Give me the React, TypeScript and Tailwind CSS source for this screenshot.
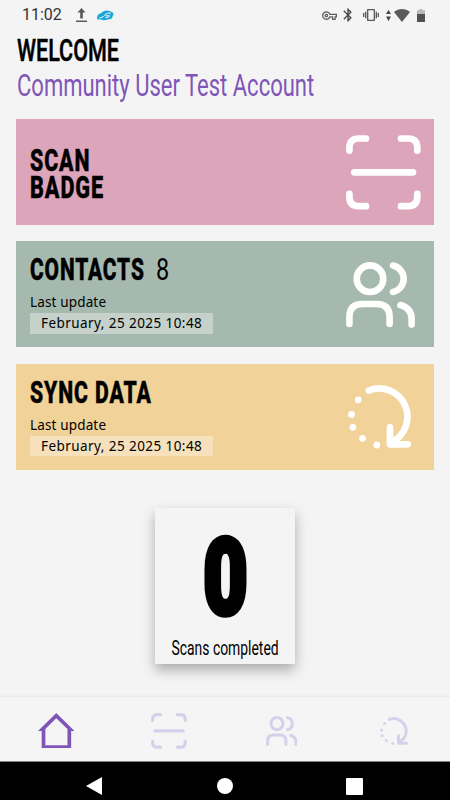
import type { ReactNode } from 'react';
import { MdBluetooth, MdOutlineVpnKey, MdVibration } from 'react-icons/md';

type IconProps = { className?: string };

function ScanIcon({ className }: IconProps) {
  return (
    <svg viewBox="26 24.7 75 75" className={className} fill="none" stroke="currentColor" strokeWidth="6.7" strokeLinecap="round" strokeLinejoin="round">
      <path d="M29.4 40.3V37.5Q29.4 28.2 38.7 28.2H46" />
      <path d="M81 28.2H88Q97.3 28.2 97.3 37.5V40.3" />
      <path d="M29.4 83.6V86.5Q29.4 95.9 38.7 95.9H46" />
      <path d="M81 95.9H88Q97.3 95.9 97.3 86.5V83.6" />
      <path d="M34.3 62H93" />
    </svg>
  );
}

function ContactsIcon({ className }: IconProps) {
  return (
    <svg viewBox="26 27 69 66" className={className} fill="none" stroke="currentColor" strokeWidth="6.6" strokeLinecap="round" strokeLinejoin="round">
      <circle cx="50" cy="43.7" r="13.3" />
      <path d="M73 30.6A13.5 13.5 0 0 1 73 57" />
      <path d="M29.4 89V82Q29.4 69 42.5 69H56.5Q69.6 69 69.6 82V89" />
      <path d="M80.4 70Q91.6 73 91.6 84V89.6" />
    </svg>
  );
}

function SyncIcon({ className }: IconProps) {
  return (
    <svg viewBox="27.5 30 63.5 63.5" className={className} fill="none" stroke="currentColor" strokeWidth="6.7" strokeLinecap="round" strokeLinejoin="round">
      <path d="M48.3 35.5A28.3 28.3 0 0 1 71 87.3" />
      <path d="M69.5 72.3V89.3H87.3" />
      <g fill="currentColor" stroke="none">
        <circle cx="37.7" cy="44.8" r="3.4" />
        <circle cx="31" cy="59.4" r="3.4" />
        <circle cx="32.3" cy="72.3" r="3.4" />
        <circle cx="42" cy="83.3" r="3.4" />
        <circle cx="56.3" cy="90" r="3.4" />
      </g>
    </svg>
  );
}

function HomeIcon({ className }: IconProps) {
  return (
    <svg viewBox="0 0 109 106" className={className} fill="currentColor" fillRule="evenodd">
      <path d="M54.5 0L109 54H99V106H11V54H0ZM54.5 16L22 48V96H88V48Z" />
    </svg>
  );
}

function StatusBar() {
  return (
    <div className="flex h-[30px] items-center pl-[22px] pr-[25px] text-[#5a5a5a]">
      <span className="w-[54px] font-['Roboto',sans-serif] text-[16px] leading-none text-[#333]">11:02</span>
      <svg viewBox="0 0 11 14" className="h-[14px] w-[11px]" fill="currentColor">
        <path d="M5.5 0L9.5 4.5H6.8V10.5H4.2V4.5H1.5ZM0 12.4H11V14H0Z" />
      </svg>
      <svg viewBox="0 0 17 11" className="ml-[10px] h-[11px] w-[17px]">
        <path d="M0 8C0 5 2 3.5 4.5 3C6 .5 10 -.3 13 1.3C16.5 2 17.5 4.5 15.5 6C16 8 14 9.8 11 9.3C9 10.5 5 10.5 4 9.2C2 10 0 9.5 0 8Z" fill="#18a9dc" />
        <path d="M2.5 8C6 7.3 7.5 6 8.5 4.2Q9.5 3 14 3M8.5 5.8H12.5Q12.5 7.5 8.5 7.6" fill="none" stroke="#f4f4f4" strokeWidth="1" />
      </svg>
      <div className="ml-auto flex items-center">
        <MdOutlineVpnKey className="size-[15px]" />
        <MdBluetooth className="ml-[3px] size-[16px] text-[#444]" />
        <MdVibration className="ml-[7px] size-[16px]" />
        <svg viewBox="0 0 5 11" className="ml-[7px] h-[11px] w-[5px]" fill="#444">
          <path d="M2.5 0L5 4H0ZM2.5 11L0 6.6H5Z" />
        </svg>
        <svg viewBox="0 0 16 13" className="ml-[3px] h-[13px] w-[16px]" fill="currentColor">
          <path d="M0 3C4.5 -1 11.5 -1 16 3L8 13Z" />
        </svg>
        <svg viewBox="0 0 8 13" className="ml-[7px] h-[13px] w-[8px]">
          <path d="M0 1.2H2.4V0H5.6V1.2H8V5H0Z" fill="#b9b9b9" />
          <path d="M0 5H8V13H0Z" fill="#505050" />
        </svg>
      </div>
    </div>
  );
}

function ActionCard({ color, icon, children }: { color: string; icon: ReactNode; children: ReactNode }) {
  return (
    <section className={`flex h-[106px] justify-between pl-[14px] text-white ${color}`}>
      <div className="text-black">{children}</div>
      {icon}
    </section>
  );
}

function LastUpdate() {
  return (
    <div className="font-['Noto_Sans',sans-serif] text-[13.5px] leading-[20px]">
      <p className="h-[21px] whitespace-nowrap tracking-[0.15px]">Last update</p>
      <p className="h-[20.5px] w-[183px] whitespace-nowrap bg-white/35 pl-[11px] tracking-[0.43px]">February, 25 2025 10:48</p>
    </div>
  );
}

export default function App() {
  return (
    <div className="flex h-[800px] w-[450px] flex-col overflow-hidden bg-[#f4f4f4] font-['Roboto',sans-serif]">
      <StatusBar />

      <header className="h-[89px] pl-[16.5px]">
        <h1 className="h-[38px] pt-[3px] text-[31px] font-medium leading-[36px]">
          <span className="inline-block origin-left scale-x-[0.695] whitespace-nowrap [-webkit-text-stroke:0.5px_black]">WELCOME</span>
        </h1>
        <p className="text-[31px] leading-[36px] text-[#8055b8]">
          <span className="inline-block origin-left scale-x-[0.71] whitespace-nowrap">Community User Test Account</span>
        </p>
      </header>

      <main className="flex flex-1 flex-col items-center">
        <div className="flex w-full flex-col gap-[16.4px] pl-[16px] pr-[16.5px]">
          <ActionCard color="bg-[#dca5b9]" icon={<ScanIcon className="mr-[12.5px] mt-[15.7px] size-[75px]" />}>
            <h2 className="w-[75px] pt-[27.5px] text-[30.5px] font-extrabold leading-[27px] tracking-[1.3px]">
              <span className="block origin-left scale-x-[0.7] whitespace-nowrap [-webkit-text-stroke:0.5px_black]">SCAN</span>
              <span className="block origin-left scale-x-[0.71] whitespace-nowrap [-webkit-text-stroke:0.5px_black]">BADGE</span>
            </h2>
          </ActionCard>

          <ActionCard color="bg-[#a6b9ae]" icon={<ContactsIcon className="mr-[18.5px] mt-[20.6px] h-[66px] w-[69px]" />}>
            <h2 className="flex h-[51px] pt-[11px] text-[30.5px] leading-[36px]">
              <span className="w-[126px] whitespace-nowrap font-extrabold tracking-[1.3px]"><span className="inline-block origin-left scale-x-[0.685] [-webkit-text-stroke:0.5px_black]">CONTACTS</span></span>
              <span className="inline-block origin-left scale-x-[0.77]">8</span>
            </h2>
            <LastUpdate />
          </ActionCard>

          <ActionCard color="bg-[#f1d298]" icon={<SyncIcon className="mr-[22.5px] mt-[21.3px] size-[63.5px]" />}>
            <h2 className="h-[51px] w-[130px] pt-[11px] text-[30.5px] font-extrabold leading-[36px] tracking-[1.3px]">
              <span className="inline-block origin-left scale-x-[0.695] whitespace-nowrap [-webkit-text-stroke:0.5px_black]">SYNC DATA</span>
            </h2>
            <LastUpdate />
          </ActionCard>
        </div>

        <section className="mt-[38.2px] flex h-[156px] w-[140px] flex-col items-center bg-[#f4f4f4] shadow-[0_6px_12px_rgba(0,0,0,0.3)]">
          <strong className="h-[127px] scale-x-[0.73] pt-[11px] text-[105px] font-black leading-[120px] [-webkit-text-stroke:5.5px_black]">0</strong>
          <span className="scale-x-[0.695] whitespace-nowrap text-[20px] leading-[26px]">Scans completed</span>
        </section>
      </main>

      <nav className="flex h-[65px] items-center border-t border-[#e9e9e9] bg-[#f5f5f5] pt-[3px] text-[#d6d1ea] shadow-[0_-1px_2px_rgba(0,0,0,0.03)]">
        <span className="flex flex-1 justify-center"><HomeIcon className="h-[35.5px] w-[36.5px] text-[#8055b8]" /></span>
        <span className="flex flex-1 justify-center"><ScanIcon className="size-[36px]" /></span>
        <span className="flex flex-1 justify-center"><ContactsIcon className="h-[30px] w-[31.5px]" /></span>
        <span className="flex flex-1 justify-center"><SyncIcon className="size-[28px]" /></span>
      </nav>

      <footer className="flex h-[39px] items-center border-t border-[#7b8580] bg-black pt-[10px] text-white">
        <svg viewBox="0 0 16 18" className="ml-[86px] h-[18px] w-[16px]" fill="currentColor"><path d="M16 0V18L0 9Z" /></svg>
        <span className="ml-[115px] size-[16px] rounded-full bg-white" />
        <span className="ml-[113px] size-[17px] rounded-[1px] bg-white" />
      </footer>
    </div>
  );
}
